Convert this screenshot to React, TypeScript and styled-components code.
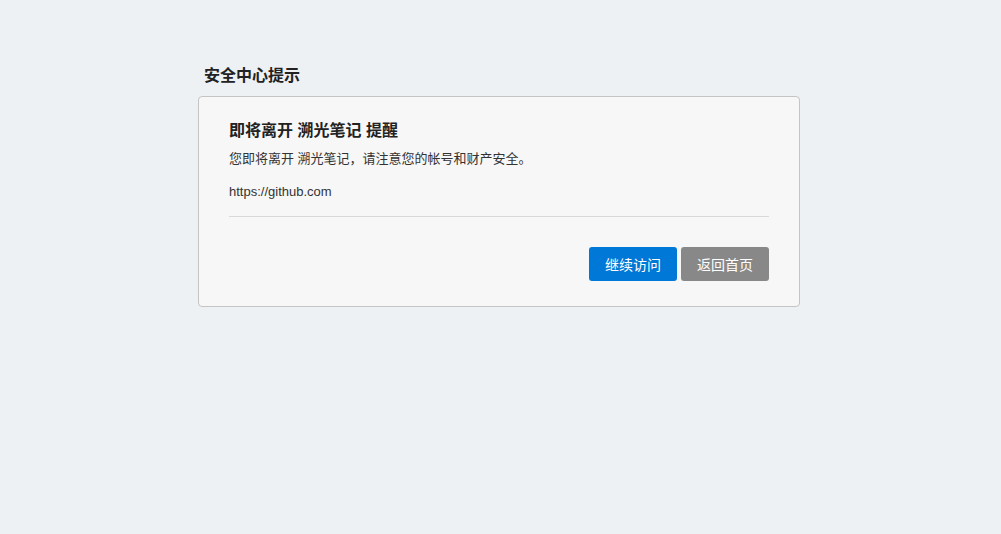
import React from "react";
import styled, { createGlobalStyle } from "styled-components";

const Global = createGlobalStyle`
  html, body { margin: 0; padding: 0; background: #eef1f4; }
  body { font-family: "Liberation Sans", "Noto Sans CJK SC", Arial, sans-serif; color: #333; }
  * { box-sizing: border-box; }
`;

const Page = styled.div`
  min-height: 534px;
  padding-top: 65px;
  display: flex;
  justify-content: center;
`;

const Wrap = styled.div`
  width: 602px;
  margin-left: -3px;
`;

const PageTitle = styled.h1`
  margin: 0 0 9px 6px;
  font-size: 16px;
  line-height: 22px;
  font-weight: bold;
  color: #222;
`;

const Card = styled.div`
  background: #f7f7f7;
  border: 1px solid #c4c4c4;
  border-radius: 4px;
  padding: 22px 30px 25px 30px;
`;

const Heading = styled.h2`
  margin: 0;
  font-size: 16px;
  line-height: 24px;
  font-weight: bold;
  color: #222;
`;

const Text = styled.p<{ $gap: number }>`
  margin: ${(p) => p.$gap}px 0 0 0;
  font-size: 13px;
  line-height: 20px;
  color: #333;
`;

const Divider = styled.hr`
  margin: 14px 0 0 0;
  border: none;
  border-top: 1px solid #d9d9d9;
  height: 0;
`;

const Actions = styled.div`
  display: flex;
  justify-content: flex-end;
  gap: 4px;
  margin-top: 30px;
`;

const Button = styled.button<{ $variant: "primary" | "secondary" }>`
  width: 88px;
  height: 34px;
  border: none;
  border-radius: 3px;
  font-family: "Noto Sans CJK SC", sans-serif;
  font-size: 14px;
  color: #fff;
  cursor: pointer;
  background: ${(p) => (p.$variant === "primary" ? "#0078d7" : "#888888")};
`;

export default function App() {
  return (
    <>
      <Global />
      <Page>
        <Wrap>
          <PageTitle>安全中心提示</PageTitle>
          <Card>
            <Heading>即将离开 溯光笔记 提醒</Heading>
            <Text $gap={6}>您即将离开 溯光笔记，请注意您的帐号和财产安全。</Text>
            <Text $gap={13}>https://github.com</Text>
            <Divider />
            <Actions>
              <Button $variant="primary">继续访问</Button>
              <Button $variant="secondary">返回首页</Button>
            </Actions>
          </Card>
        </Wrap>
      </Page>
    </>
  );
}
